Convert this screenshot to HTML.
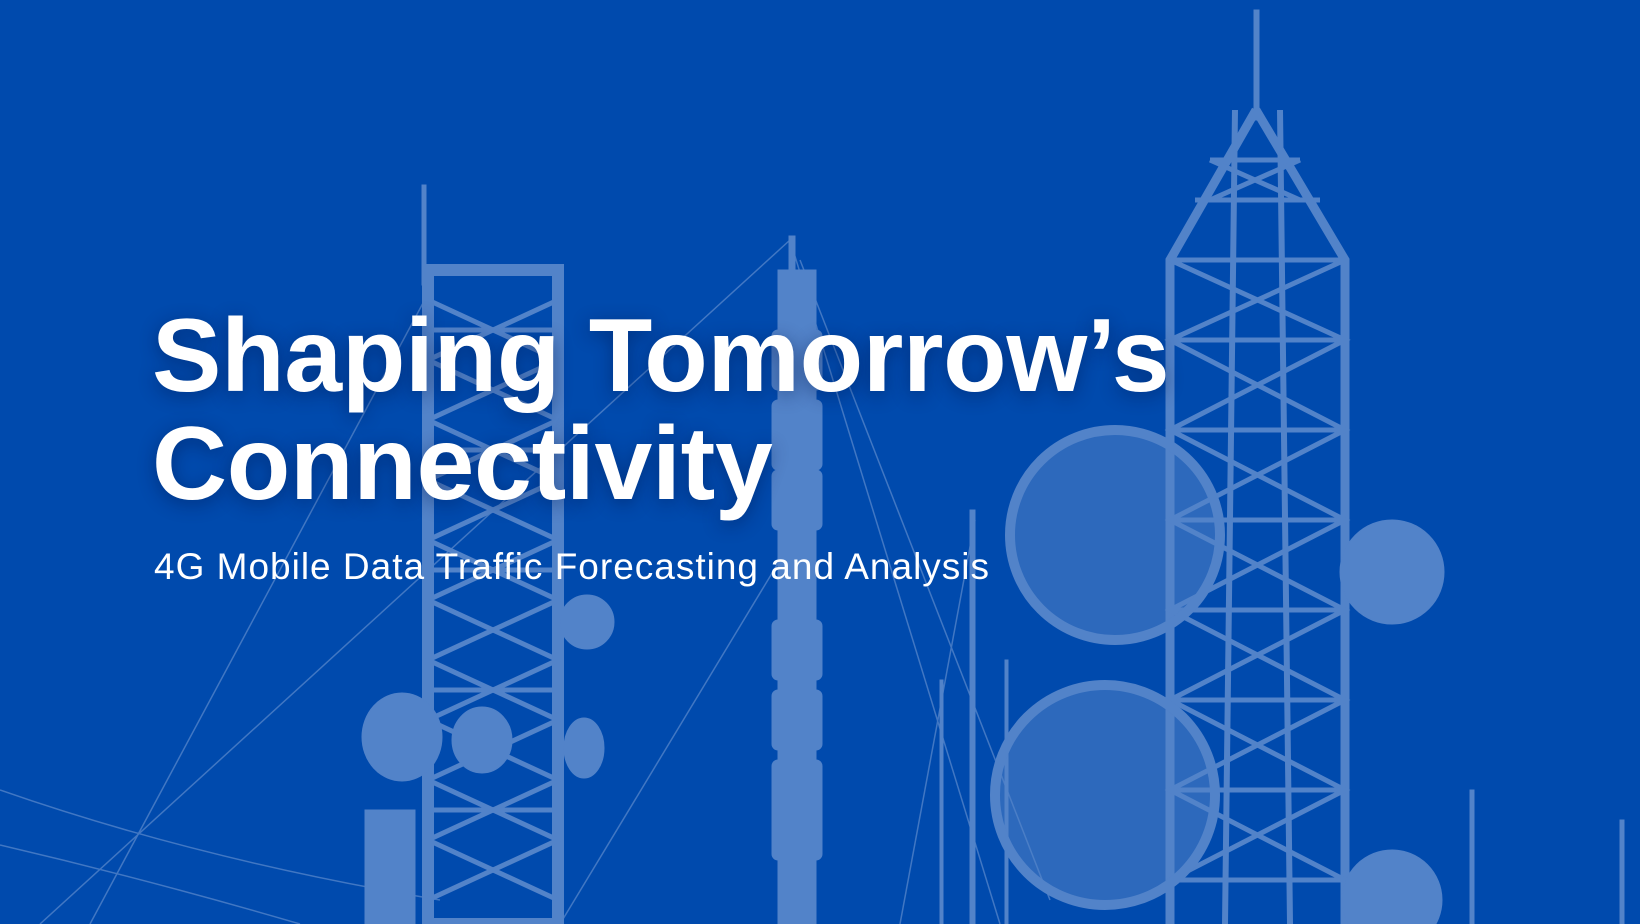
<!DOCTYPE html>
<html><head><meta charset="utf-8"><style>
html,body{margin:0;padding:0}
body{width:1640px;height:924px;background:#004aad;position:relative;overflow:hidden;font-family:"Liberation Sans",sans-serif}
svg{position:absolute;left:0;top:0}
.t{position:absolute;left:152px;color:#fff;font-weight:bold;font-size:104px;white-space:nowrap;text-shadow:0 4px 18px rgba(0,20,70,.45);letter-spacing:-0.3px}
.s{position:absolute;left:154px;top:546px;color:#fff;font-size:37px;white-space:nowrap;letter-spacing:1px}
</style></head><body>
<svg width="1640" height="924" viewBox="0 0 1640 924">
<g fill="#5283c9" stroke="#5283c9">
<g stroke-width="1.5" fill="none" opacity=".8">
<path d="M0 790 Q200 860 440 900"/><path d="M0 845 Q150 880 300 924"/>
<path d="M790 240 L40 924"/><path d="M790 240 L1000 924"/><path d="M800 260 L1050 900"/>
<path d="M430 290 L90 924"/><path d="M780 560 L560 924"/><path d="M975 520 L900 924"/>
</g>
<rect x="422" y="185" width="4" height="100"/>
<rect x="428" y="270" width="130" height="654" fill="none" stroke-width="12"/>
<g stroke-width="5" fill="none">
<path d="M428 300 L558 360 L428 420 L558 480 L428 540 L558 600 L428 660 L558 720 L428 780 L558 840 L428 900"/>
<path d="M558 300 L428 360 L558 420 L428 480 L558 540 L428 600 L558 660 L428 720 L558 780 L428 840 L558 900"/>
<path d="M428 330H558M428 450H558M428 570H558M428 690H558M428 810H558"/>
</g>
<circle cx="587" cy="622" r="27"/><ellipse cx="402" cy="737" rx="40" ry="44"/><ellipse cx="482" cy="740" rx="30" ry="33"/><ellipse cx="584" cy="748" rx="20" ry="30"/>
<rect x="365" y="810" width="50" height="114"/>
<rect x="789" y="236" width="6" height="40"/>
<rect x="778" y="270" width="38" height="654"/>
<rect x="772" y="330" width="50" height="60" rx="6"/><rect x="772" y="400" width="50" height="70" rx="6"/><rect x="772" y="470" width="50" height="60" rx="6"/>
<rect x="772" y="620" width="50" height="60" rx="6"/><rect x="772" y="690" width="50" height="60" rx="6"/><rect x="772" y="760" width="50" height="100" rx="6"/>
<rect x="970" y="510" width="5" height="414"/><rect x="940" y="680" width="3" height="244"/><rect x="1005" y="660" width="3" height="264"/>
<rect x="1254" y="10" width="5" height="110"/>
<g stroke-width="9" fill="none">
<path d="M1256 110 L1170 260 L1170 924 M1256 110 L1345 260 L1345 924"/>
<path d="M1235 110 L1225 924 M1280 110 L1290 924" stroke-width="6"/>
</g>
<g stroke-width="5" fill="none">
<path d="M1170 260H1345M1170 340H1345M1170 430H1345M1170 520H1345M1170 610H1345M1170 700H1345M1170 790H1345M1170 880H1345"/>
<path d="M1170 260L1345 340L1170 430L1345 520L1170 610L1345 700L1170 790L1345 880"/>
<path d="M1345 260L1170 340L1345 430L1170 520L1345 610L1170 700L1345 790L1170 880"/>
<path d="M1210 160H1300M1195 200H1320M1210 160L1300 200M1300 160L1210 200"/>
</g>
<g fill="none" stroke-width="10"><circle cx="1115" cy="535" r="105"/><circle cx="1105" cy="795" r="110"/></g>
<g opacity=".55"><circle cx="1115" cy="535" r="100"/><circle cx="1105" cy="795" r="105"/></g>
<circle cx="1392" cy="572" r="52"/><circle cx="1392" cy="900" r="50"/>
<rect x="1470" y="790" width="4" height="134"/><rect x="1620" y="820" width="4" height="104"/>
</g>
</svg>
<div class="t" style="top:297px">Shaping Tomorrow’s</div>
<div class="t" style="top:405px">Connectivity</div>
<div class="s">4G Mobile Data Traffic Forecasting and Analysis</div>
</body></html>
